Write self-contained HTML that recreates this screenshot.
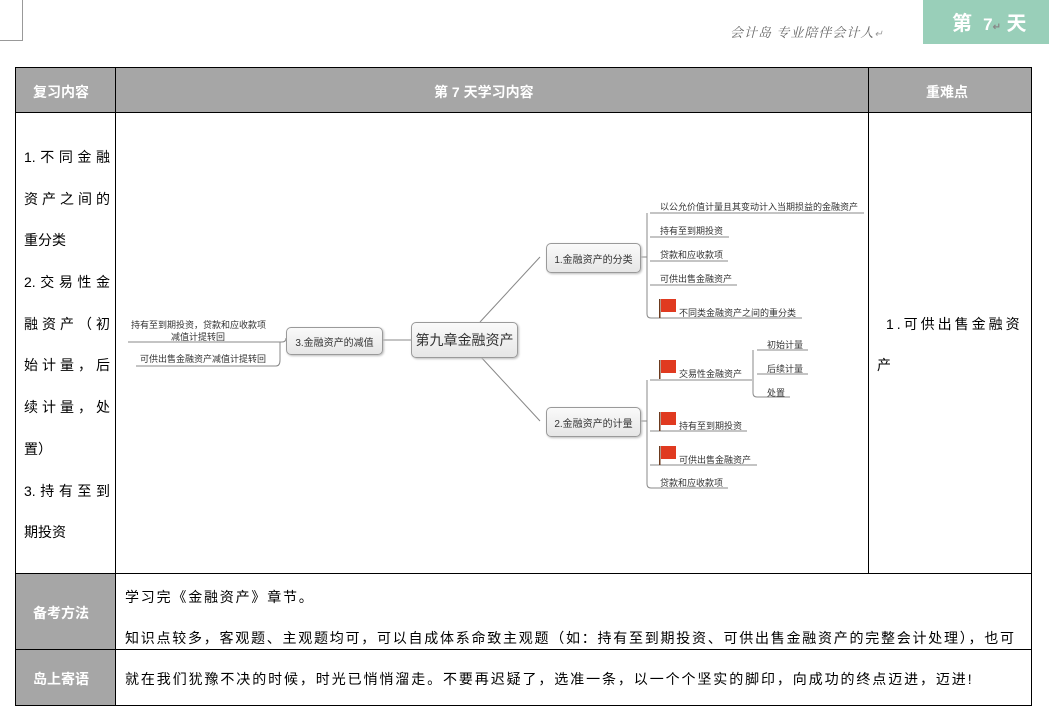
<!DOCTYPE html>
<html><head><meta charset="utf-8"><style>
body{margin:0;width:1049px;height:711px;background:#fff;position:relative;overflow:hidden;font-family:"Liberation Sans","Noto Sans CJK SC",sans-serif;color:#000}
.a{position:absolute;white-space:nowrap}
.h{background:#a6a6a6;color:#fff;font-weight:bold;font-size:14px}
.ln{position:absolute;background:#000}
.t{font-size:14px}
.m{font-size:9px;color:#333}
.j{width:86px;text-align:justify;text-align-last:justify;white-space:nowrap;height:41.7px}
.l{white-space:nowrap;height:41.7px}
.box{position:absolute;border:1px solid #9a9a9a;border-radius:5px;background:linear-gradient(#fafafa,#e6e6e6);box-shadow:1px 1px 2px #bbb;color:#333;display:flex;align-items:center;justify-content:center}
</style></head><body>
<div class="ln" style="left:22px;top:0;width:1px;height:40px;background:#999"></div>
<div class="ln" style="left:0;top:40px;width:23px;height:1px;background:#999"></div>
<div class="a" style="left:730px;top:22px;font-size:13px;color:#666;font-style:italic;font-family:'Noto Serif CJK SC',serif;letter-spacing:1px">会计岛 专业陪伴会计人<span style="color:#999;font-size:10px">↵</span></div>
<div class="a" style="left:923px;top:0;width:126px;height:44px;background:#99cfb9"></div>
<div class="a" style="left:952px;top:7px;font-size:20px;font-weight:bold;color:#fff">第&nbsp;&nbsp;<span style="font-size:17px">7</span><span style="font-size:10px;color:#888">↵</span> 天</div>

<div class="a h" style="left:15px;top:67px;width:1016px;height:45px"></div>
<div class="a h" style="left:15px;top:573px;width:100px;height:132px"></div>
<div class="ln" style="left:15px;top:67px;width:1017px;height:1px"></div>
<div class="ln" style="left:15px;top:112px;width:1017px;height:1px"></div>
<div class="ln" style="left:15px;top:573px;width:1017px;height:1px"></div>
<div class="ln" style="left:15px;top:649px;width:1017px;height:1px"></div>
<div class="ln" style="left:15px;top:705px;width:1017px;height:1px"></div>
<div class="ln" style="left:15px;top:67px;width:1px;height:639px"></div>
<div class="ln" style="left:115px;top:67px;width:1px;height:639px"></div>
<div class="ln" style="left:868px;top:67px;width:1px;height:506px"></div>
<div class="ln" style="left:1031px;top:67px;width:1px;height:639px"></div>

<div class="a h" style="left:33px;top:82px;background:none">复习内容</div>
<div class="a h" style="left:434px;top:82px;background:none">第 7 天学习内容</div>
<div class="a h" style="left:926px;top:82px;background:none">重难点</div>
<div class="a h" style="left:33px;top:603px;background:none">备考方法</div>
<div class="a h" style="left:33px;top:669px;background:none">岛上寄语</div>

<div class="a t" style="left:24px;top:137px;line-height:41.7px">
<div class="j">1.不同金融</div><div class="j">资产之间的</div><div class="l">重分类</div><div class="j">2.交易性金</div><div class="j">融资产（初</div><div class="j">始计量，后</div><div class="j">续计量，处</div><div class="l">置）</div><div class="j">3.持有至到</div><div class="l">期投资</div></div>
<div class="a t" style="left:886px;top:314px;letter-spacing:3px">1.可供出售金融资</div>
<div class="a t" style="left:877px;top:355px">产</div>

<div class="a t" style="left:125px;top:587px;letter-spacing:1.8px">学习完《金融资产》章节。</div>
<div class="a t" style="left:125px;top:628px;letter-spacing:1.75px">知识点较多，客观题、主观题均可，可以自成体系命致主观题（如：持有至到期投资、可供出售金融资产的完整会计处理），也可</div>
<div class="a t" style="left:125px;top:669px;letter-spacing:1.9px">就在我们犹豫不决的时候，时光已悄悄溜走。不要再迟疑了，选准一条，以一个个坚实的脚印，向成功的终点迈进，迈进!</div>

<svg class="a" style="left:0;top:0" width="1049" height="711">
<g stroke="#888" fill="none" stroke-width="1">
<path d="M382 340H411M480 322L540 257M480 356L540 421"/>
<path d="M128 342H282Q286 342 286 338M136 366H276Q280 366 280 360V342"/>
<path d="M640 257H647M650 213H864M647 213V314Q647 318 651 318H802M650 237H729M650 261H728M650 285H737"/>
<path d="M640 421H647M647 380V484Q647 488 651 488H728M650 380H752M753 350V393Q753 397 757 397H790M757 350H808M757 374H808M650 431H747M650 465H757"/>
</g>
<g>
<rect x="659" y="299" width="1.5" height="19" fill="#6b3a1e"/><path d="M661 299H676V312H661Z" fill="#e03a20"/>
<rect x="659" y="360" width="1.5" height="19" fill="#6b3a1e"/><path d="M661 360H676V373H661Z" fill="#e03a20"/>
<rect x="659" y="412" width="1.5" height="19" fill="#6b3a1e"/><path d="M661 412H676V425H661Z" fill="#e03a20"/>
<rect x="659" y="446" width="1.5" height="19" fill="#6b3a1e"/><path d="M661 446H676V459H661Z" fill="#e03a20"/>
</g>
</svg>
<div class="box" style="left:411px;top:322px;width:105px;height:34px;font-size:14px">第九章金融资产</div>
<div class="box" style="left:286px;top:327px;width:95px;height:26px;font-size:10px">3.金融资产的减值</div>
<div class="box" style="left:546px;top:243px;width:93px;height:28px;font-size:10px">1.金融资产的分类</div>
<div class="box" style="left:546px;top:407px;width:93px;height:28px;font-size:10px">2.金融资产的计量</div>
<div class="a m" style="left:131px;top:318px">持有至到期投资，贷款和应收款项</div>
<div class="a m" style="left:171px;top:330px">减值计提转回</div>
<div class="a m" style="left:140px;top:352px">可供出售金融资产减值计提转回</div>
<div class="a m" style="left:660px;top:200px">以公允价值计量且其变动计入当期损益的金融资产</div>
<div class="a m" style="left:660px;top:224px">持有至到期投资</div>
<div class="a m" style="left:660px;top:248px">贷款和应收款项</div>
<div class="a m" style="left:660px;top:272px">可供出售金融资产</div>
<div class="a m" style="left:679px;top:306px">不同类金融资产之间的重分类</div>
<div class="a m" style="left:679px;top:367px">交易性金融资产</div>
<div class="a m" style="left:767px;top:338px">初始计量</div>
<div class="a m" style="left:767px;top:362px">后续计量</div>
<div class="a m" style="left:767px;top:386px">处置</div>
<div class="a m" style="left:679px;top:419px">持有至到期投资</div>
<div class="a m" style="left:679px;top:453px">可供出售金融资产</div>
<div class="a m" style="left:660px;top:476px">贷款和应收款项</div>
</body></html>
